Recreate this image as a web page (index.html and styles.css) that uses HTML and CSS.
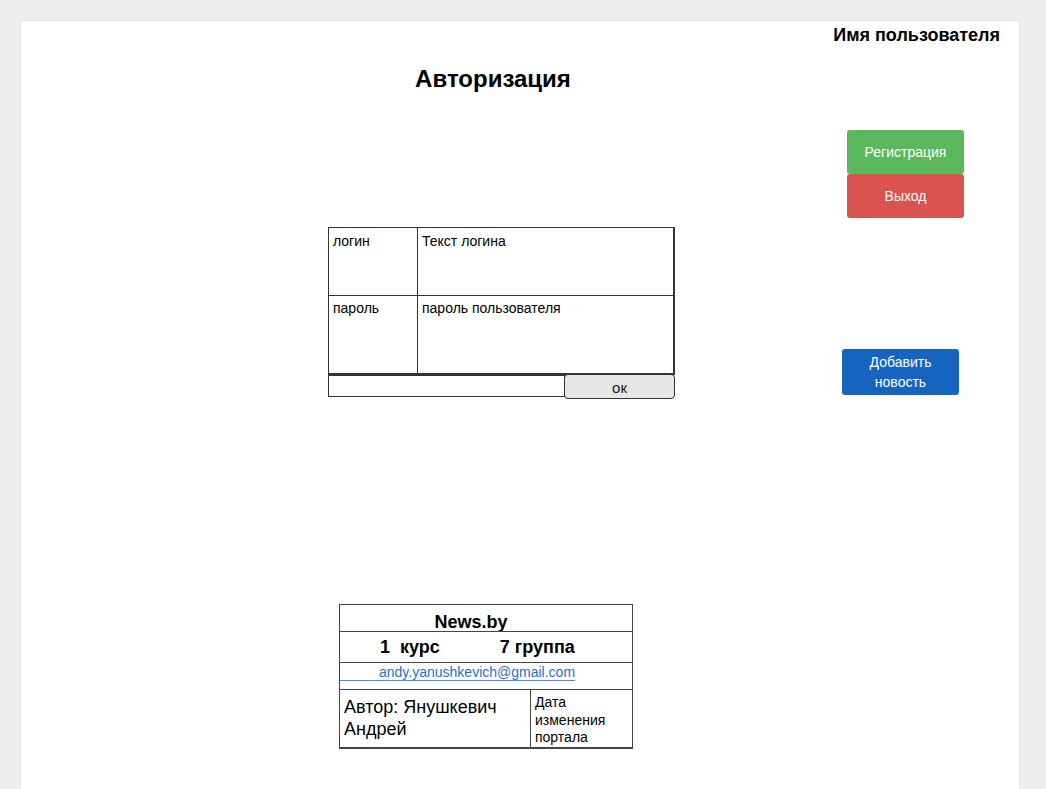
FILE: index.html
```html
<!DOCTYPE html>
<html lang="ru">
<head>
<meta charset="utf-8">
<title>Авторизация</title>
<link rel="stylesheet" href="styles.css">
</head>
<body>
<div class="page">
  <header class="topbar"><span class="username">Имя пользователя</span></header>
  <h1 class="title">Авторизация</h1>
  <div class="layout">
    <main class="content">
      <form class="login">
        <div class="login-grid">
          <div class="cell label">логин</div>
          <div class="cell value">Текст логина</div>
          <div class="cell label">пароль</div>
          <div class="cell value">пароль пользователя</div>
        </div>
        <div class="login-foot">
          <div class="foot-input"></div>
          <button type="button" class="ok">ок</button>
        </div>
      </form>
      <footer class="info">
        <div class="info-row site">News.by</div>
        <div class="info-row course"><span>1&nbsp;&nbsp;курс</span><span class="group">7 группа</span></div>
        <div class="info-row mail"><a class="email" href="#">andy.yanushkevich@gmail.com</a></div>
        <div class="info-row bottom">
          <div class="author">Автор: Янушкевич Андрей</div>
          <div class="date">Дата изменения портала</div>
        </div>
      </footer>
    </main>
    <aside class="actions">
      <button type="button" class="btn btn-green">Регистрация</button>
      <button type="button" class="btn btn-red">Выход</button>
      <button type="button" class="btn btn-blue">Добавить<br>новость</button>
    </aside>
  </div>
</div>
</body>
</html>
```

FILE: styles.css
```css
html, body {
  margin: 0;
  padding: 0;
  background: #eeeeee;
  font-family: "Liberation Sans", Arial, sans-serif;
  color: #000;
}

.page {
  margin: 20px 0 0 20px;
  width: 1000px;
  min-height: 769px;
  background: #fff;
  border: 1px solid #e2e2e2;
  border-bottom: none;
  box-sizing: border-box;
}

.topbar {
  display: flex;
  justify-content: flex-end;
  padding: 4px 19px 0 0;
}

.username {
  font-size: 18px;
  line-height: 20px;
  font-weight: bold;
}

.title {
  margin: 20px 0 0 322px;
  width: 300px;
  text-align: center;
  font-size: 24px;
  line-height: 28px;
  font-weight: bold;
}

.layout {
  display: flex;
  align-items: flex-start;
}

.content {
  width: 821px;
  display: flex;
  flex-direction: column;
}

/* Login form */
.login {
  margin: 134px 0 0 307px;
  width: 347px;
}

.login-grid {
  display: grid;
  grid-template-columns: 89px 1fr;
  grid-template-rows: 68px 79px;
  border: 1px solid #333;
  border-right-width: 2px;
  border-bottom-width: 2px;
  box-sizing: border-box;
  height: 148px;
}

.cell {
  font-size: 14px;
  line-height: 16px;
  padding: 5px 4px;
}

.cell.label {
  border-right: 1px solid #333;
}

.cell:nth-child(1), .cell:nth-child(2) {
  border-bottom: 1px solid #333;
}

.cell:nth-child(3), .cell:nth-child(4) {
  padding-top: 4px;
}

.login-foot {
  display: flex;
  align-items: flex-start;
  margin-top: -1px;
}

.foot-input {
  width: 237px;
  height: 22px;
  margin-top: 1px;
  border: 1px solid #333;
  box-sizing: border-box;
}

.ok {
  width: 111px;
  height: 25px;
  margin-left: -1px;
  background: #e6e6e6;
  border: 1px solid #333;
  border-radius: 4px;
  font-family: "Liberation Sans", Arial, sans-serif;
  font-size: 15px;
  font-weight: normal;
  line-height: 18px;
  color: #1a1a1a;
  padding: 2px 0 0;
}

/* Footer info table */
.info {
  margin: 205px 0 0 318px;
  width: 294px;
  border: 1px solid #444;
  border-bottom-width: 2px;
  box-sizing: border-box;
}

.info-row {
  border-bottom: 1px solid #444;
  box-sizing: border-box;
  overflow: hidden;
}

.site {
  height: 27px;
  padding: 7px 30px 0 0;
  text-align: center;
  font-size: 18px;
  line-height: 20px;
  font-weight: bold;
}

.course {
  height: 31px;
  padding: 5px 0 0 40px;
  display: flex;
  font-size: 18px;
  line-height: 20px;
  font-weight: bold;
}

.group {
  margin-left: 60px;
}

.mail {
  height: 27px;
  padding-top: 0;
}

.email {
  display: inline-block;
  padding-left: 39px;
  font-size: 14px;
  line-height: 15px;
  color: #1f6fd1;
  text-decoration: none;
  border-bottom: 1px solid #4a8ae0;
}

.bottom {
  border-bottom: none;
  display: grid;
  grid-template-columns: 191px 1fr;
  height: 57px;
}

.author {
  border-right: 1px solid #444;
  padding: 6px 4px 0;
  font-size: 18px;
  line-height: 22px;
}

.date {
  padding: 4px 4px 0;
  font-size: 14px;
  line-height: 17.5px;
  overflow: hidden;
}

/* Action buttons */
.actions {
  display: flex;
  flex-direction: column;
  align-items: flex-start;
  margin-top: 37px;
}

.btn {
  width: 117px;
  border: none;
  border-radius: 3px;
  color: #fff;
  font-family: "Liberation Sans", Arial, sans-serif;
  font-size: 14px;
  line-height: 20px;
  padding: 0;
}

.btn-green {
  margin-left: 5px;
  height: 44px;
  background: #5cb85c;
}

.btn-red {
  margin-left: 5px;
  height: 44px;
  background: #d9534f;
}

.btn-blue {
  margin-top: 131px;
  height: 46px;
  background: #1565c0;
}
```
